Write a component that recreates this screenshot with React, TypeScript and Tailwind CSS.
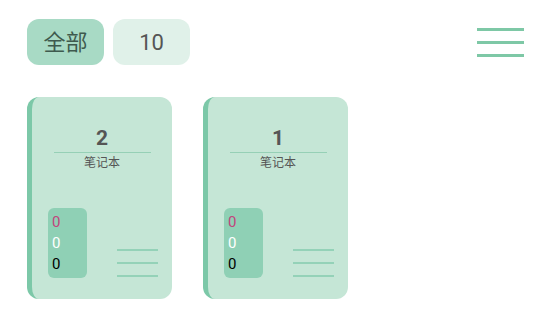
import React from 'react';

type Book = { id: number; count: number };

const books: Book[] = [
  { id: 1, count: 2 },
  { id: 2, count: 1 },
];

function Notebook({ count }: { count: number }) {
  return (
    <div className="flex h-[202px] w-[145px] flex-col overflow-hidden rounded-[12px] border-l-[5px] border-[#7cc8a8] bg-[#c5e6d6]">
      <div className="flex flex-col items-center pt-[28px]">
        <div className="text-[21px] font-bold leading-[26px] text-[#555]">{count}</div>
        <div className="mt-[1px] h-px w-[97px] bg-[#96d0b6]" />
        <div className="mt-[3px] text-[12px] leading-[15px] text-[#555]">笔记本</div>
      </div>
      <div className="flex flex-1 items-end justify-between pb-[21px] pl-[16px] pr-[14px]">
        <div className="flex h-[70px] w-[39px] flex-col rounded-[6px] bg-[#8fd0b5] pl-[4px] pt-[4px] text-[15px] leading-[21px]">
          <span className="text-[#c2447c]">0</span>
          <span className="text-white">0</span>
          <span className="text-black">0</span>
        </div>
        <div className="flex w-[41px] flex-col gap-[11px] pb-px">
          <div className="h-[2px] bg-[#94d2b8]" />
          <div className="h-[2px] bg-[#94d2b8]" />
          <div className="h-[2px] bg-[#94d2b8]" />
        </div>
      </div>
    </div>
  );
}

export default function App() {
  return (
    <div
      className="h-[309px] w-[550px] overflow-hidden bg-white pl-[27px] pr-[26px] pt-[19px]"
      style={{ fontFamily: 'Roboto, "Noto Sans CJK SC", sans-serif' }}
    >
      <div className="flex items-start justify-between">
        <div className="flex gap-[9px]">
          <button className="flex h-[46px] w-[77px] items-center justify-center rounded-[12px] bg-[#a8dac5] text-[22px] text-[#3f5a4e]">
            全部
          </button>
          <button className="flex h-[46px] w-[77px] items-center justify-center rounded-[12px] bg-[#e0f1e9] text-[22px] text-[#555]">
            10
          </button>
        </div>
        <div className="mt-[9px] flex w-[47px] flex-col gap-[10px]">
          <div className="h-[3px] bg-[#7ec8a6]" />
          <div className="h-[3px] bg-[#7ec8a6]" />
          <div className="h-[3px] bg-[#7ec8a6]" />
        </div>
      </div>
      <div className="mt-[32px] flex gap-[31px]">
        {books.map((b) => (
          <Notebook key={b.id} count={b.count} />
        ))}
      </div>
    </div>
  );
}
